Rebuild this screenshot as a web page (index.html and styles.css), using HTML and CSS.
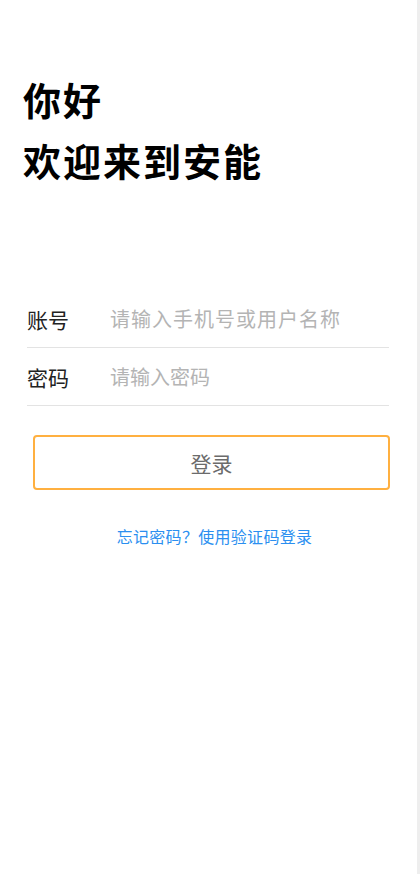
FILE: index.html
```html
<!DOCTYPE html>
<html>
<head>
    <meta charset="utf-8">
    <title>登录</title>
    <link rel="stylesheet" href="styles.css">
</head>
<body>
    <div class="page">
        <div class="title">
            <div>你好</div>
            <div>欢迎来到安能</div>
        </div>

        <form class="login-form">
            <div class="form-row">
                <label for="account">账号</label>
                <input type="text" id="account" class="wide" placeholder="请输入手机号或用户名称">
            </div>
            <div class="form-row">
                <label for="password">密码</label>
                <input type="password" id="password" placeholder="请输入密码">
            </div>
            <button type="submit">登录</button>
        </form>

        <div class="links">
            <a href="#">忘记密码？使用验证码登录</a>
        </div>
    </div>
</body>
</html>
```

FILE: styles.css
```css
html, body {
    margin: 0;
    height: 100%;
}
body {
    background-color: #eeeeee;
    font-family: "Noto Sans CJK SC", "Noto Sans", sans-serif;
}
.page {
    background-color: #fff;
    margin-right: 3px;
    min-height: 100%;
    padding-top: 68px;
    box-sizing: border-box;
}
.title {
    padding-left: 23px;
    font-size: 38px;
    font-weight: bold;
    line-height: 61px;
    letter-spacing: 2px;
    color: #000;
}
.login-form {
    margin: 100px 28px 0 27px;
}
.form-row {
    display: flex;
    align-items: center;
    height: 57px;
    border-bottom: 1px solid #e3e3e3;
}
.form-row label {
    width: 83px;
    flex-shrink: 0;
    font-size: 21px;
    color: #222;
}
.form-row input {
    flex: 1;
    min-width: 0;
    border: none;
    outline: none;
    padding: 0;
    font-family: inherit;
    font-size: 20px;
    color: #333;
}
.form-row input::placeholder {
    color: #b4b4b4;
}
.form-row input.wide::placeholder {
    letter-spacing: 1px;
}
button {
    display: block;
    width: calc(100% - 5px);
    margin: 29px 0 0 6px;
    height: 55px;
    background-color: #fff;
    border: 2px solid #ffb040;
    border-radius: 4px;
    font-family: inherit;
    font-size: 21px;
    color: #6b6b6b;
    cursor: pointer;
}
.links {
    margin-top: 35px;
    padding-left: 12px;
    text-align: center;
    font-size: 16px;
    line-height: 22px;
}
.links a {
    color: #2b8ff0;
    text-decoration: none;
    letter-spacing: 0.3px;
}
```
